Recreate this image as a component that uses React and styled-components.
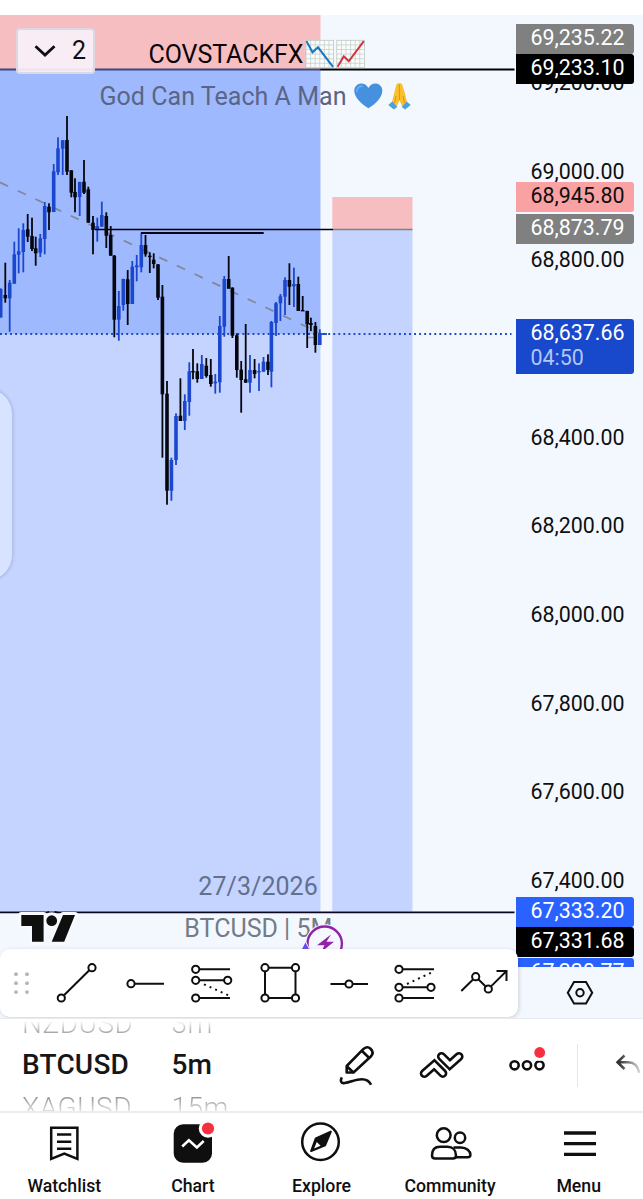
import styled, { createGlobalStyle } from "styled-components";

const UP = "#1b47cf";
const DOWN = "#05070f";

// [x, high, bodyTop, bodyBottom, low, rising]
const candles = [
  [0.7, 288.3, 289, 317.5, 317.5, 1],
  [5.3, 262.7, 295, 298.3, 302.7, 0],
  [9.7, 280, 282.7, 298.3, 331.7, 1],
  [14.3, 241.7, 254.3, 283.7, 283.7, 1],
  [18.7, 228.3, 251.3, 254.7, 273.3, 1],
  [23.3, 223.3, 230, 252, 272.3, 1],
  [27.7, 214, 229.3, 236.7, 242, 0],
  [32, 217.7, 236, 249, 251, 0],
  [35.7, 236.7, 248.3, 253.3, 265.7, 0],
  [40.3, 234, 238.3, 252.7, 257, 1],
  [44.7, 202, 206, 239, 254.3, 1],
  [49, 203.3, 206.7, 212.3, 230, 0],
  [53.7, 164, 171.3, 212, 212, 1],
  [58, 137.3, 148.3, 172.3, 175, 1],
  [62.7, 140, 140.3, 148.7, 175, 1],
  [67, 116, 140, 171.7, 175, 0],
  [71.3, 170.3, 170.3, 192.7, 197.3, 0],
  [75, 178.3, 192, 197.3, 212.3, 0],
  [79.7, 181.7, 182, 197, 216, 1],
  [84, 160, 181.7, 192.7, 194, 0],
  [88.3, 186.7, 189.3, 222.7, 222.7, 0],
  [93, 216, 222.7, 230, 254.3, 0],
  [97.3, 217.7, 226, 230.3, 241.7, 1],
  [101.8, 201.7, 215, 226.7, 226.7, 1],
  [106.3, 212.3, 216, 235.7, 248, 0],
  [110.7, 226, 235, 255.7, 255.7, 0],
  [114.3, 255, 255.7, 319.7, 337.3, 0],
  [118.8, 291, 306, 319.7, 340.7, 1],
  [123.3, 278.7, 279, 305, 310.7, 1],
  [127.7, 270, 279.3, 304, 325, 0],
  [132.3, 261, 266.7, 304, 304, 1],
  [136.7, 255, 265.3, 267.3, 281.3, 1],
  [141.3, 232.7, 245, 267.3, 272.3, 1],
  [145.5, 235, 245, 254.3, 256.7, 0],
  [149.8, 252.3, 255.7, 257, 273, 0],
  [153.7, 253.3, 259.7, 264, 268.3, 0],
  [158, 264.3, 264.3, 297.7, 300, 0],
  [162.4, 285, 296.7, 394.3, 457.7, 0],
  [167, 381, 393.7, 490.7, 504.7, 0],
  [171.4, 457.7, 460, 490.7, 500.7, 1],
  [176, 413.3, 416, 460, 465, 1],
  [180.4, 378.3, 415.7, 421, 421, 0],
  [184.8, 394.3, 401, 421, 430, 1],
  [189.3, 362.3, 371.3, 402, 415.7, 1],
  [193, 349, 371, 372.3, 379.3, 0],
  [197.3, 363.3, 371.3, 379, 382.7, 0],
  [201.8, 355, 364, 379, 379, 1],
  [206.3, 358, 365.7, 376, 377.7, 0],
  [210.8, 359, 375, 384, 386.7, 0],
  [215.3, 374, 381.7, 383.3, 393.7, 1],
  [219.8, 316, 326, 382.3, 392.7, 1],
  [224.3, 276, 279, 326.7, 336.7, 1],
  [228.7, 256, 279, 288.7, 288.7, 0],
  [232.4, 287.3, 287.7, 335.7, 338, 0],
  [236.8, 333.3, 335.3, 370, 377.7, 0],
  [241.2, 361, 369.7, 380, 412.7, 0],
  [245.7, 324, 379.3, 382.7, 382.7, 0],
  [250, 355, 370, 382.7, 392.7, 1],
  [254.6, 359, 370, 374, 378.3, 0],
  [259, 363.3, 371, 372.3, 391, 1],
  [263.5, 357, 361.7, 371.7, 371.7, 1],
  [268, 354.3, 361.7, 370, 375, 0],
  [271.4, 321, 322, 371.7, 387.3, 1],
  [276, 302, 303.3, 323, 336, 1],
  [280.4, 294, 296.3, 303.3, 321, 1],
  [285, 277.3, 280, 296.7, 315, 1],
  [289.4, 263.3, 280, 286.7, 305, 0],
  [293.9, 267.7, 284, 286.3, 307, 1],
  [298.3, 276.7, 284, 311, 311, 0],
  [302.7, 296, 310, 311, 311, 0],
  [307.2, 310.7, 311, 324.3, 348, 0],
  [310.9, 317.7, 323, 325, 331, 0],
  [315.4, 322, 326, 345, 352.7, 0],
  [319.8, 329.3, 334.3, 345, 345, 1],
];

const ticks = [
  [82, "69,200.00"],
  [170.5, "69,000.00"],
  [259.2, "68,800.00"],
  [436.5, "68,400.00"],
  [525, "68,200.00"],
  [614, "68,000.00"],
  [702.5, "67,800.00"],
  [791, "67,600.00"],
  [879.5, "67,400.00"],
];

const tags = [
  { top: 24, text: "69,235.22", bg: "#808080" },
  { top: 54.4, text: "69,233.10", bg: "#000" },
  { top: 182, text: "68,945.80", bg: "#f9a1a3", color: "#0f0f0f" },
  { top: 214.3, text: "68,873.79", bg: "#808080" },
  { top: 897, text: "67,333.20", bg: "#2962ff" },
  { top: 927.4, text: "67,331.68", bg: "#000" },
  { top: 958.3, text: "67,330.77", bg: "#2962ff" },
];

const Candle = ({ data }) => {
  const [x, high, top, bottom, low, rising] = data;
  const color = rising ? UP : DOWN;
  return (
    <g fill={color}>
      <rect x={x - 0.9} y={high} width="1.8" height={low - high} />
      <rect
        x={x - 1.8}
        y={top}
        width="3.6"
        height={Math.max(bottom - top, 1.4)}
      />
    </g>
  );
};

const GridEmoji = ({ x, up }) => (
  <g transform={`translate(${x} 40.3)`}>
    <rect width="27.6" height="27.4" fill="#fafcfa" stroke="#b9c9c3" strokeWidth=".8" />
    <path
      d="M4.6 0v27M9.2 0v27M13.8 0v27M18.4 0v27M23 0v27M0 4.6h27M0 9.2h27M0 13.8h27M0 18.4h27M0 23h27"
      stroke="#bccbc6"
      strokeWidth=".7"
    />
    <path
      d={up ? "M.8 26.5 7 16l5 5L27 .8" : "M.5.8 6.5 12l5.500-5L27 26.500"}
      fill="none"
      stroke={up ? "#d6303f" : "#1477c4"}
      strokeWidth="2"
    />
  </g>
);

const ChartDrawing = () => (
  <Drawing viewBox="0 15 515 1003">
    <rect x="0" y="15" width="320.5" height="54.5" fill="#f7bec1" />
    <rect x="0" y="69.5" width="320.5" height="264.5" fill="#9fb9ff" />
    <rect x="0" y="334" width="320.5" height="577.5" fill="#c5d3ff" />
    <rect x="332.3" y="197" width="80.2" height="32.5" fill="#f7bec1" />
    <rect x="332.3" y="229.5" width="80.2" height="682" fill="#c5d3ff" />

    <path d="M0 182.4 321 333.5" stroke="#80889a" strokeWidth="1.8" strokeDasharray="9 10.55" />
    <path d="M307.5 337.5h7" stroke="#8790a3" strokeWidth="1.5" />
    <path d="M0 334H511.5" stroke={UP} strokeWidth="1.8" strokeDasharray="1.9 3.15" />
    <path d="M0 69.5H321" stroke="#3c4a79" strokeWidth="2.2" />
    <path d="M320.5 69.5H514.5" stroke="#000" strokeWidth="2" />
    <path d="M0 912.3H514.5" stroke="#070520" strokeWidth="1.8" />

    <text x="148.5" y="62.6" textLength="155" fill="#0a0608">COVSTACKFX</text>
    <text x="99.5" y="104.6" textLength="247" fill="#5a6585">God Can Teach A Man</text>
    <text x="198.3" y="894.8" textLength="119.5" fill="#62708f">27/3/2026</text>
    <text x="184.3" y="936.6" textLength="148" fill="#747b86">BTCUSD | 5M</text>

    {candles.map((c) => (
      <Candle key={c[0]} data={c} />
    ))}
    <path d="M320 334h7" stroke={UP} strokeWidth="1.8" />
    <path d="M95 229.5H333" stroke="#000" strokeWidth="1.5" />
    <path d="M333 229.5H412.5" stroke="#7d8189" strokeWidth="1.3" />
    <path d="M141 233.1H263.7" stroke="#000418" strokeWidth="2" />

    <GridEmoji x={306} />
    <GridEmoji x={336.8} up />
    <path
      d="M368.4 108.3C360 103 354.3 97 354.3 90.5 354.3 83 364.5 80.5 368.4 88 372.3 80.5 382.3 83 382.3 90.5 382.3 97 377 103 368.4 108.3Z"
      fill="#4591de"
    />
    <path d="M357 91c.3-3.5 2.5-4.8 5-4.7" fill="none" stroke="#64aaf0" strokeWidth="2" strokeLinecap="round" />
    <path
      d="M399.3 83.5c-1.8-.8-3 .5-3.3 2.5l-2 7.5-2 8.5 4.5 5 3-6.5 3 6.5 4.500-5-2-8.500-2.300-7.500c-.3-2-1.600-3.300-3.400-2.500Z"
      fill="#fbc02d"
    />
    <path d="M399.4 84v16M396 96l-1.5 7M403 96l1.5 7" stroke="#dc8f15" strokeWidth=".9" fill="none" />
    <path d="m388.3 105 4-3.5 5 5.5-3.5 2.5ZM410.7 105l-4-3.5-5 5.5 3.5 2.5Z" fill="#48a3d6" />

    <g stroke="#f6faff" strokeWidth="6" strokeLinejoin="round" fill="#f6faff">
      <path d="M21.3 915h22.3v26.7H32V926H21.3ZM63 915h12l-10.8 26.7H51.7Z" />
      <circle cx="51.7" cy="920.7" r="5.4" />
    </g>
    <g fill="#0f0f0f">
      <path d="M21.3 915h22.3v26.7H32V926H21.3ZM63 915h12l-10.8 26.7H51.7Z" />
      <circle cx="51.7" cy="920.7" r="5.4" />
    </g>
    <path d="M46.5 912.5q1-1 2.5-1M54.5 911.5q2 0 4 1" stroke="#111" strokeWidth="1" fill="none" />

    <circle cx="324.7" cy="943.7" r="19.5" fill="#f3f8ff" />
    <circle cx="324.7" cy="943.7" r="17.2" fill="#f6f8ff" stroke="#9023a8" strokeWidth="2.4" />
    <path d="m331 934.5-14 10.7h7.5l-3.5 7 13-10.5h-7.5Z" fill="#9023a8" />
    <path d="M300.5 951l5-9.5 5 9.5Z" fill="#6a4df0" stroke="#f3f8ff" strokeWidth="1" />
  </Drawing>
);

const drawTools = [
  <>
    <path d="M21 46.3 46.3 21.3" />
    <circle cx="18.3" cy="49" r="3.6" />
    <circle cx="49" cy="18.7" r="3.6" />
  </>,
  <>
    <path d="M23.6 34.7H53" />
    <circle cx="20" cy="34.7" r="3.6" />
  </>,
  <>
    <path d="M20.3 20.3H51M20.3 31.3H45M20.3 49H51" />
    <path d="m25 35.3 24.5 11" strokeDasharray="2 4.1" />
    <circle cx="16.7" cy="20.3" r="3.6" />
    <circle cx="16.7" cy="31.3" r="3.6" />
    <circle cx="48.7" cy="31.3" r="3.6" />
    <circle cx="16.7" cy="49" r="3.6" />
  </>,
  <>
    <path d="M21.6 18.7H45M21.6 49H45M18 22.3V45.4M48.5 22.3V45.4" />
    <circle cx="18" cy="18.7" r="3.6" />
    <circle cx="48.5" cy="18.7" r="3.6" />
    <circle cx="18" cy="49" r="3.6" />
    <circle cx="48.5" cy="49" r="3.6" />
  </>,
  <>
    <path d="M15.5 35H30.4M37.6 35H53" />
    <circle cx="34" cy="35" r="3.6" />
  </>,
  <>
    <path d="M19.6 20.3H51M19.6 38.3H44.4M19.6 49H51" />
    <path d="m24 35 24.5-11.5" strokeDasharray="2 4.1" />
    <circle cx="16" cy="20.3" r="3.6" />
    <circle cx="16" cy="38.3" r="3.6" />
    <circle cx="48" cy="38.3" r="3.6" />
    <circle cx="16" cy="49" r="3.6" />
  </>,
  <>
    <path d="m10.3 42 11.7-11.5M27.3 30.3l7.4 7.2M40 37.4 55.5 22M45.5 22h10v10" />
    <circle cx="24.7" cy="27.7" r="3.6" />
    <circle cx="37.3" cy="40" r="3.6" />
  </>,
];

const actions = [
  <>
    <path
      d="M13.7 31.5v-6.5L30 8.3c2.8-2.8 5.5-2.600 7.800-.3s2.500 4.800 0 7.500L20.500 31.500Z"
      strokeLinejoin="round"
    />
    <path d="m28.5 9.5 8 7.8M13.7 25.200l6.800 6.300" />
    <path d="M8.800 36.300c-1.800 3.500-1 6.300 3 5.700 6-1 11-3.800 17-3.800 5 0 7.500 1.800 9.200 5.600" />
  </>,
  <>
    <path d="m6.300 32.500 10-8.700 8.500 8.500M23.500 15.500l8.300 8.200 9.200-8.200" strokeWidth="9.200" strokeLinecap="round" />
    <path d="m6.300 32.500 10-8.700 8.500 8.500M23.500 15.500l8.300 8.200 9.200-8.200" stroke="#fff" strokeWidth="4" strokeLinecap="round" />
  </>,
  <>
    <circle cx="11.6" cy="24.3" r="4.1" />
    <circle cx="24" cy="24.3" r="4.1" />
    <circle cx="36.5" cy="24.3" r="4.1" />
    <circle cx="36.7" cy="11.5" r="8.5" fill="#fff" stroke="none" />
    <circle cx="36.7" cy="11.5" r="5.4" fill="#f7303f" stroke="none" />
  </>,
];

const navItems = [
  {
    label: "Watchlist",
    icon: (
      <>
        <path d="M11.2 9.8h26.2v31L24.3 35.5 11.2 40.8Z" />
        <path d="M17 16.6h14.3M17 23.7h14.3M17 30.7h14.3" />
      </>
    ),
  },
  {
    label: "Chart",
    icon: (
      <>
        <rect x="4.7" y="6.3" width="38.3" height="38.5" rx="9.5" fill="#0f0f0f" stroke="none" />
        <path d="m13.2 28.5 6.7-6.2 8 7.2 6.8-6.5" stroke="#fff" />
        <circle cx="39" cy="10.5" r="9.2" fill="#fff" stroke="none" />
        <circle cx="39" cy="10.5" r="6.1" fill="#f7303f" stroke="none" />
      </>
    ),
  },
  {
    label: "Explore",
    icon: (
      <>
        <circle cx="23.5" cy="23.8" r="18.3" />
        <path d="M33.8 13.6 18.8 20.3 14.1 33.1 28.1 27.3Z" fill="#0f0f0f" strokeWidth="2" strokeLinejoin="round" />
        <path d="m19.8 24 3.800 3.800-6.500 2.700Z" fill="#fff" stroke="none" />
      </>
    ),
  },
  {
    label: "Community",
    icon: (
      <>
        <circle cx="17.7" cy="17.2" r="6.9" />
        <circle cx="34" cy="19.700" r="5.2" />
        <path d="M6 37.5C6 32 9 28.800 14 28.800h7.500c5 0 8.500 3.200 8.500 8.700 0 2-1 3-3 3H9c-2 0-3-1-3-3Z" />
        <path d="M27.5 29.500H35c5.500 0 9.400 3.500 9.400 7.300 0 1.500-1 2.500-2.700 2.500H30" />
      </>
    ),
  },
  {
    label: "Menu",
    icon: <path d="M9 15h32M9 25.700h32M9 36.300h32" strokeWidth="3.300" />,
  },
];

const App = () => {
  return (
    <Screen>
      <GlobalStyle />
      <Chart>
        <ChartDrawing />
        <PriceAxis>
          <Scale>
            {ticks.map(([y, text]) => (
              <Tick key={text} $y={y - 15}>
                {text}
              </Tick>
            ))}
            {tags.map((t) => (
              <Tag key={t.text} $y={t.top - 15} $bg={t.bg} $color={t.color}>
                {t.text}
              </Tag>
            ))}
            <Tag $y={303.7} $bg="#1848cc" $tall>
              68,637.66
              <Countdown>04:50</Countdown>
            </Tag>
          </Scale>
          <AxisFooter>
            <svg width="30" height="30" fill="none" stroke="#0f0f0f" strokeWidth="2">
              <path d="M9 4h12l6.200 10.700L21 25.400H9L2.800 14.700Z" />
              <circle cx="15" cy="14.700" r="3.700" />
            </svg>
          </AxisFooter>
        </PriceAxis>
        <Legend>
          <svg width="22" height="14" fill="none" stroke="#0f0f0f" strokeWidth="2.8">
            <path d="m1.5 2.300 9.500 8.700L20.500 2.300" />
          </svg>
          2
        </Legend>
        <EdgeHandle />
        <DrawBar>
          <svg width="43" height="68" fill="#b5b5b8">
            {[25.2, 34.2, 43.1].map((y) => (
              <g key={y}>
                <circle cx="16" cy={y} r="1.9" />
                <circle cx="27" cy={y} r="1.9" />
              </g>
            ))}
          </svg>
          {drawTools.map((shape, i) => (
            <svg key={i} width="68" height="68" fill="none" stroke="#0f0f0f" strokeWidth="2">
              {shape}
            </svg>
          ))}
        </DrawBar>
      </Chart>
      <QuickBar>
        <Wheel $width={149.5}>
          <WheelItem $side="top">NZDUSD</WheelItem>
          <WheelItem $active>BTCUSD</WheelItem>
          <WheelItem $side="bottom">XAGUSD</WheelItem>
        </Wheel>
        <Wheel $width={142.5}>
          <WheelItem $side="top">3m</WheelItem>
          <WheelItem $active>5m</WheelItem>
          <WheelItem $side="bottom">15m</WheelItem>
        </Wheel>
        {actions.map((shape, i) => (
          <Action key={i}>
            <svg width="48" height="48" fill="none" stroke="#0f0f0f" strokeWidth="2.600">
              {shape}
            </svg>
          </Action>
        ))}
        <Divider />
        <Undo width="30" height="30" fill="none" strokeWidth="2.5">
          <defs>
            <linearGradient id="fade" gradientUnits="userSpaceOnUse" x1="4" y1="0" x2="25" y2="0">
              <stop offset="0" stopColor="#333" />
              <stop offset="1" stopColor="#d5d5d5" />
            </linearGradient>
          </defs>
          <path d="m9.5 5.500-7 6.700 7 6.800M2.500 12.200H13c6.500 0 10 4 11.300 10.500" stroke="url(#fade)" />
        </Undo>
      </QuickBar>
      <Nav>
        {navItems.map(({ label, icon }) => (
          <NavItem key={label}>
            <svg width="48" height="48" fill="none" stroke="#0f0f0f" strokeWidth="2.5">
              {icon}
            </svg>
            {label}
          </NavItem>
        ))}
      </Nav>
    </Screen>
  );
};

export default App;

const GlobalStyle = createGlobalStyle`
  body {
    margin: 0;
    background: #fff;
    overflow: hidden;
  }
  svg {
    display: block;
    flex-shrink: 0;
  }
`;
const Screen = styled.div`
  display: flex;
  flex-direction: column;
  width: 643px;
  height: 1199px;
  padding-top: 15px;
  box-sizing: border-box;
  overflow: hidden;
  background: #fff;
  color: #0f0f0f;
  font-family: Roboto, "Liberation Sans", sans-serif;
`;
const Chart = styled.div`
  position: relative;
  display: grid;
  grid-template-columns: 515px 128px;
  height: 1003px;
  flex-shrink: 0;
  overflow: hidden;
  background: #f3f8ff;
`;
const Drawing = styled.svg`
  width: 515px;
  height: 1003px;
  font-size: 25px;
`;
const PriceAxis = styled.div`
  display: flex;
  flex-direction: column;
  font-size: 21.4px;
`;
const Scale = styled.div`
  position: relative;
  height: 952px;
  overflow: hidden;
`;
const Tick = styled.div`
  position: absolute;
  top: ${({ $y }) => $y - 13}px;
  left: 15.5px;
  line-height: 27px;
`;
const Tag = styled.div`
  position: absolute;
  top: ${({ $y }) => $y}px;
  left: 1px;
  width: 118px;
  height: ${({ $tall }) => ($tall ? 55 : 30)}px;
  padding-left: 14.5px;
  box-sizing: border-box;
  border-radius: 0 3px 3px 0;
  line-height: 27px;
  background: ${({ $bg }) => $bg};
  color: ${({ $color }) => $color || "#fff"};
`;
const Countdown = styled.div`
  line-height: 23px;
  color: #b3c6f5;
`;
const AxisFooter = styled.div`
  display: flex;
  justify-content: center;
  align-items: center;
  flex: 1;
  padding-left: 1px;
`;
const Legend = styled.div`
  position: absolute;
  top: 13px;
  left: 16px;
  display: flex;
  align-items: center;
  gap: 16px;
  width: 79px;
  height: 46px;
  padding: 0 0 1px 16px;
  box-sizing: border-box;
  border: 2px solid #dcd8e2;
  border-radius: 4px;
  background: rgba(247, 240, 248, 0.93);
  font-size: 25px;
`;
const EdgeHandle = styled.div`
  position: absolute;
  top: 373px;
  left: -40px;
  width: 53px;
  height: 193px;
  box-sizing: border-box;
  border: 1px solid #b4c2ea;
  border-radius: 26px;
  background: #d8e4ff;
  box-shadow: 0 0 3px rgba(70, 90, 160, 0.3);
`;
const DrawBar = styled.div`
  position: absolute;
  top: 934px;
  left: 0;
  display: flex;
  width: 518px;
  height: 68px;
  border-radius: 10px;
  background: #fff;
  box-shadow: 1px 1px 4px rgba(0, 0, 0, 0.16);
  overflow: hidden;
`;
const QuickBar = styled.div`
  display: flex;
  align-items: center;
  height: 95px;
  padding-left: 22px;
  box-sizing: border-box;
  border-top: 1px solid #e8eaee;
  border-bottom: 2px solid #ededef;
  flex-shrink: 0;
  overflow: hidden;
`;
const Wheel = styled.div`
  display: flex;
  flex-direction: column;
  justify-content: center;
  width: ${({ $width }) => $width}px;
  height: 92px;
  padding-top: 1px;
  box-sizing: border-box;
  flex-shrink: 0;
  overflow: hidden;
`;
const fades = {
  top: "linear-gradient(#fff 42%, #8c8c8c 80%)",
  bottom: "linear-gradient(#8c8c8c 20%, #f4f4f4 66%)",
};
const WheelItem = styled.div`
  height: 42.5px;
  line-height: 42.5px;
  flex-shrink: 0;
  font-size: 28px;
  font-weight: ${({ $active }) => ($active ? 500 : 300)};
  letter-spacing: ${({ $active }) => ($active ? 0.2 : 0.5)}px;
  color: ${({ $side }) => ($side ? "transparent" : "#161616")};
  background: ${({ $side }) => ($side ? fades[$side] : "none")};
  background-clip: text;
  -webkit-background-clip: text;

  &:first-child {
    position: relative;
    top: 1px;
  }
`;
const Action = styled.div`
  display: flex;
  justify-content: center;
  width: 85px;
  flex-shrink: 0;
`;
const Divider = styled.div`
  width: 1px;
  height: 43px;
  margin-left: 8px;
  flex-shrink: 0;
  background: #e6e6e8;
`;
const Undo = styled.svg`
  margin-left: 37px;
`;
const Nav = styled.div`
  display: grid;
  grid-template-columns: repeat(5, 1fr);
  flex: 1;
  padding-top: 5px;
`;
const NavItem = styled.div`
  display: flex;
  flex-direction: column;
  align-items: center;
  gap: 10px;
  line-height: 21px;
  font-size: 17.7px;
  font-weight: 500;
`;
